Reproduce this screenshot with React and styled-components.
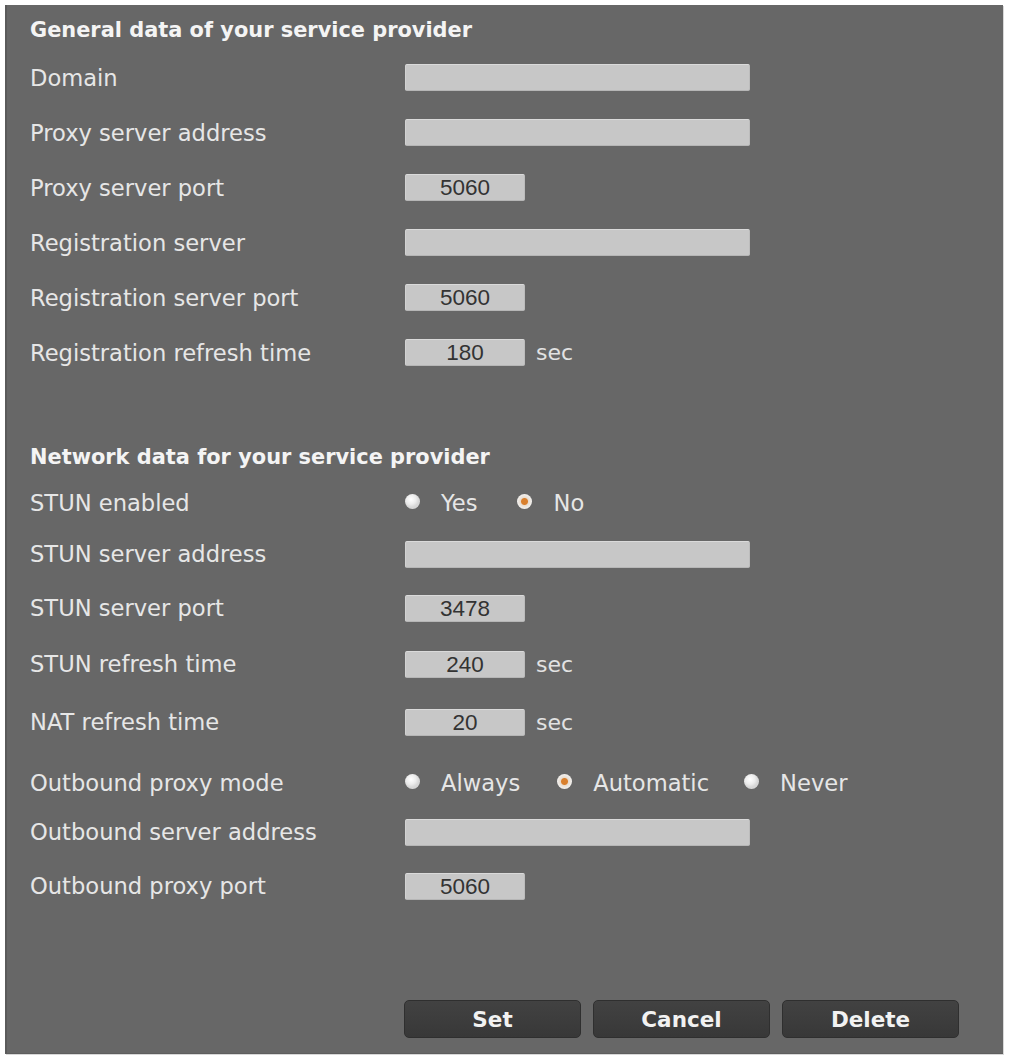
import React from "react";
import styled, { createGlobalStyle } from "styled-components";

const Global = createGlobalStyle`
  html, body { margin: 0; padding: 0; background: #ffffff; }
  body { font-family: "DejaVu Sans", Verdana, sans-serif; }
`;

const Page = styled.div`
  padding: 5px 6px 5px 5px;
`;

const Panel = styled.div`
  background: #676767;
  border-left: 2px solid #5a5a5a;
  border-bottom: 1px solid #5e5e5e;
  box-shadow: 1px 1px 0 #d8d8d8;
  height: 1049px;
  box-sizing: border-box;
  padding: 0 0 0 23px;
  display: flex;
  flex-direction: column;
`;

const Heading = styled.div`
  height: 45px;
  box-sizing: border-box;
  padding-top: 5px;
  display: flex;
  align-items: center;
  color: #f4f4f4;
  font-weight: bold;
  font-size: 20.9px;
`;

const Row = styled.div`
  height: ${(p) => p.$h}px;
  display: grid;
  grid-template-columns: 375px 1fr;
  align-items: center;
`;

const Label = styled.div`
  color: #e6e6e6;
  font-size: 22.6px;
`;

const Field = styled.div`
  display: flex;
  align-items: center;
  gap: 11px;
`;

const Input = styled.div`
  width: ${(p) => (p.$wide ? 345 : 120)}px;
  height: 27px;
  box-sizing: border-box;
  background: #c7c7c7;
  border-top: 1px solid #dadada;
  border-left: 1px solid #d2d2d2;
  border-bottom: 1px solid #b6b6b6;
  border-right: 1px solid #bcbcbc;
  border-radius: 2px;
  color: #333333;
  font-family: "Liberation Sans", Arial, sans-serif;
  font-size: 22.5px;
  line-height: 25px;
  text-align: center;
`;

const Unit = styled.span`
  color: #e2e2e2;
  font-size: 22px;
`;

const Radios = styled.div`
  display: flex;
  align-items: center;
`;

const RadioItem = styled.label`
  display: flex;
  align-items: center;
  margin-right: ${(p) => p.$mr}px;
  color: #e6e6e6;
  font-size: 22.6px;
`;

const Dot = styled.span`
  width: 15px;
  height: 15px;
  border-radius: 50%;
  margin-right: 21px;
  margin-top: -3px;
  box-sizing: border-box;
  background: ${(p) =>
    p.$on
      ? "radial-gradient(circle, #d9802e 0 3px, #e9ddd0 4px, #f1efec 7px)"
      : "radial-gradient(circle at 40% 35%, #ffffff 0, #ececec 5px, #d6d6d6 8px)"};
`;

const Spacer = styled.div`
  height: ${(p) => p.$h}px;
  flex: none;
`;

const Buttons = styled.div`
  display: flex;
  gap: 12px;
  padding-left: 374px;
`;

const Button = styled.button`
  width: 177px;
  height: 38px;
  background: linear-gradient(#424242, #383838);
  border: 1px solid #2f2f2f;
  border-radius: 5px;
  color: #f2f2f2;
  font-family: "DejaVu Sans", Verdana, sans-serif;
  font-weight: bold;
  font-size: 21.5px;
  padding: 0;
`;

const general = [
  { label: "Domain", wide: true },
  { label: "Proxy server address", wide: true },
  { label: "Proxy server port", value: "5060" },
  { label: "Registration server", wide: true },
  { label: "Registration server port", value: "5060" },
  { label: "Registration refresh time", value: "180", unit: "sec" },
];

function TextRow({ h, label, wide, value, unit }) {
  return (
    <Row $h={h}>
      <Label>{label}</Label>
      <Field>
        <Input $wide={wide}>{value}</Input>
        {unit && <Unit>{unit}</Unit>}
      </Field>
    </Row>
  );
}

function RadioRow({ h, label, options, selected }) {
  return (
    <Row $h={h}>
      <Label>{label}</Label>
      <Radios>
        {options.map((o) => (
          <RadioItem key={o.text} $mr={o.mr}>
            <Dot $on={o.text === selected} />
            {o.text}
          </RadioItem>
        ))}
      </Radios>
    </Row>
  );
}

export default function App() {
  return (
    <>
      <Global />
      <Page>
        <Panel>
          <Heading>General data of your service provider</Heading>
          {general.map((r) => (
            <TextRow key={r.label} h={55} {...r} />
          ))}
          <Spacer $h={52} />
          <Heading>Network data for your service provider</Heading>
          <RadioRow
            h={52}
            label="STUN enabled"
            selected="No"
            options={[
              { text: "Yes", mr: 40 },
              { text: "No", mr: 0 },
            ]}
          />
          <TextRow h={50} label="STUN server address" wide />
          <TextRow h={58} label="STUN server port" value="3478" />
          <TextRow h={54} label="STUN refresh time" value="240" unit="sec" />
          <TextRow h={62} label="NAT refresh time" value="20" unit="sec" />
          <RadioRow
            h={60}
            label="Outbound proxy mode"
            selected="Automatic"
            options={[
              { text: "Always", mr: 37 },
              { text: "Automatic", mr: 35 },
              { text: "Never", mr: 0 },
            ]}
          />
          <TextRow h={38} label="Outbound server address" wide />
          <TextRow h={70} label="Outbound proxy port" value="5060" />
          <Spacer $h={79} />
          <Buttons>
            <Button>Set</Button>
            <Button>Cancel</Button>
            <Button>Delete</Button>
          </Buttons>
        </Panel>
      </Page>
    </>
  );
}
